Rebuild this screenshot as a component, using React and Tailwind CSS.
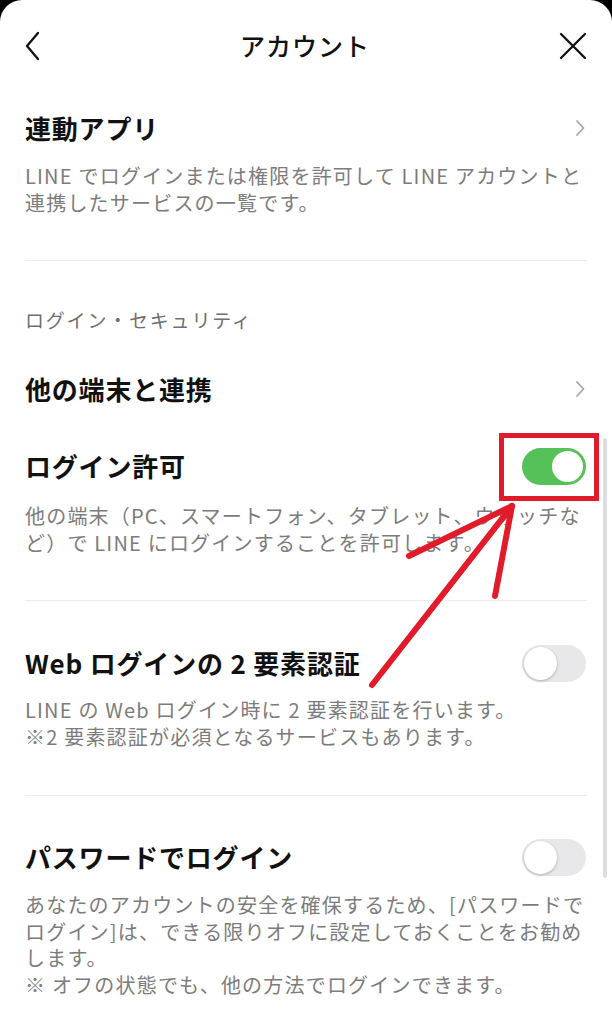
import React from "react";

const font = { fontFamily: '"Noto Sans CJK JP", "Noto Sans", sans-serif' };

const Chevron = () => (
  <svg width="12" height="18" viewBox="0 0 12 18" className="shrink-0">
    <path d="M3 2 L9.5 9 L3 16" fill="none" stroke="#a8a8a8" strokeWidth="1.8" strokeLinecap="round" strokeLinejoin="round" />
  </svg>
);

const Toggle = ({ on }) =>
  on ? (
    <div className="w-[64px] h-[37px] rounded-full bg-[#55c159] flex items-center justify-end pr-[3px]">
      <div className="w-[31px] h-[31px] rounded-full bg-white" />
    </div>
  ) : (
    <div className="w-[64px] h-[37px] rounded-full bg-[#e8e8ea] flex items-center pl-[2px]">
      <div className="w-[33px] h-[33px] rounded-full bg-white shadow-[0_1px_3px_rgba(0,0,0,0.25)]" />
    </div>
  );

const Divider = () => <div className="mx-[25px] h-px bg-[#ececec]" />;

const Title = ({ children, right }) => (
  <div className="flex items-center justify-between pl-[25px] pr-[26px] h-[36px]">
    <div className="text-[26px] font-bold text-[#111] leading-[36px] tracking-[0.8px]">{children}</div>
    {right}
  </div>
);

const Desc = ({ children, className = "" }) => (
  <div className={`px-[25px] text-[20px] leading-[26.5px] text-[#7c7c7c] tracking-[1.2px] whitespace-nowrap ${className}`}>{children}</div>
);

export default function App() {
  return (
    <div className="bg-black w-[612px] h-[1024px]" style={font}>
      <div className="relative bg-white rounded-t-[22px] w-[612px] h-[1024px] overflow-hidden">
        {/* header */}
        <div className="flex items-center justify-between h-[92px] px-[24px]">
          <svg width="18" height="30" viewBox="0 0 18 30">
            <path d="M14 2 L3 15 L14 28" fill="none" stroke="#111" strokeWidth="2.3" strokeLinecap="round" strokeLinejoin="round" />
          </svg>
          <div className="text-[25px] font-medium text-[#111] tracking-[1px] pl-[10px]">アカウント</div>
          <svg width="30" height="30" viewBox="0 0 30 30">
            <path d="M3 3 L27 27 M27 3 L3 27" fill="none" stroke="#111" strokeWidth="2.3" strokeLinecap="round" />
          </svg>
        </div>

        <div className="pt-[18px]">
          <Title right={<Chevron />}>連動アプリ</Title>
          <Desc className="mt-[16px] leading-[27px] tracking-[0.8px]">
            LINE でログインまたは権限を許可して LINE アカウントと
            <br />
            連携したサービスの一覧です。
          </Desc>
        </div>

        <div className="mt-[44px]">
          <Divider />
        </div>

        <div className="mt-[46px] px-[25px] text-[19px] leading-[26px] text-[#6f6f6f] tracking-[1.8px]">
          ログイン・セキュリティ
        </div>

        <div className="mt-[38px]">
          <Title right={<Chevron />}>他の端末と連携</Title>
        </div>

        <div className="mt-[41px]">
          <Title right={<Toggle on />}>ログイン許可</Title>
          <Desc className="mt-[18px] leading-[27px] tracking-[0.8px]">
            他の端末（PC、スマートフォン、タブレット、ウォッチな
            <br />
            ど）で LINE にログインすることを許可します。
          </Desc>
        </div>

        <div className="mt-[44px]">
          <Divider />
        </div>

        <div className="mt-[44px]">
          <Title right={<Toggle />}>Web ログインの 2 要素認証</Title>
          <Desc className="mt-[16px]">
            LINE の Web ログイン時に 2 要素認証を行います。
            <br />
            ※2 要素認証が必須となるサービスもあります。
          </Desc>
        </div>

        <div className="mt-[45px]">
          <Divider />
        </div>

        <div className="mt-[43px]">
          <Title right={<Toggle />}>パスワードでログイン</Title>
          <Desc className="mt-[17px]">
            あなたのアカウントの安全を確保するため、[パスワードで
            <br />
            ログイン]は、できる限りオフに設定しておくことをお勧め
            <br />
            します。
            <br />
            ※ オフの状態でも、他の方法でログインできます。
          </Desc>
        </div>

        {/* scroll indicator */}
        <div className="absolute left-[603px] top-[438px] w-[4px] h-[440px] rounded-full bg-[#dedede]" />

        {/* annotation */}
        <svg className="absolute left-0 top-0 pointer-events-none" width="612" height="1024">
          <rect x="501.5" y="435.5" width="95" height="63" fill="none" stroke="#e21b2a" strokeWidth="5" />
          <g stroke="#e21b2a" strokeWidth="6" strokeLinecap="round" fill="none">
            <path d="M372 685 L512 506" />
            <path d="M409 556 L512 506" />
            <path d="M495 596 L512 506" />
          </g>
        </svg>
      </div>
    </div>
  );
}
